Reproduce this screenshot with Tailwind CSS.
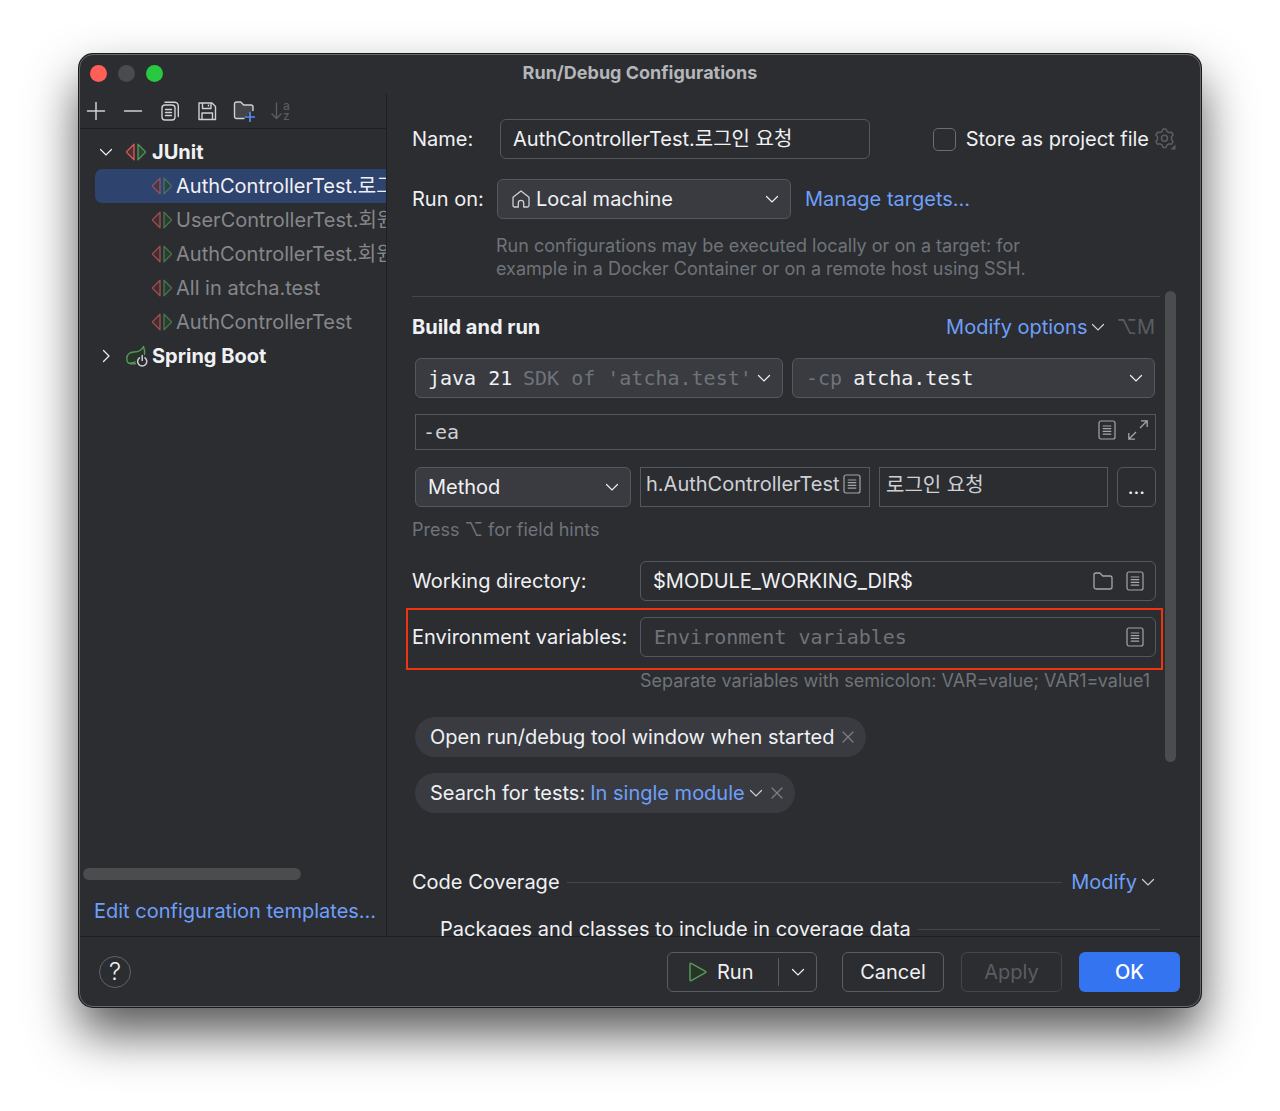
<!DOCTYPE html>
<html lang="ko">
<head>
    <meta charset="UTF-8">
    <meta name="viewport" content="width=device-width, initial-scale=1.0">
    <title>Run/Debug Configurations</title>
    <script src="https://cdn.jsdelivr.net/npm/@tailwindcss/browser@4"></script>
</head>
<body class="h-screen overflow-hidden bg-white px-[79px] pt-[54px] pb-[104px] font-['Inter','Noto_Sans_CJK_KR',sans-serif] text-[20px] leading-[28px] text-[#f0f1f4]">

    <!-- shared icons -->
    <svg class="hidden">
        <symbol id="chevron" viewBox="0 0 14 14"><path d="M1.500 4.500 7 10l5.500-5.500" fill="none" stroke="currentColor" stroke-width="1.200" stroke-linecap="round"/></symbol>
        <symbol id="list" viewBox="0 0 18 20" fill="none" stroke="currentColor" stroke-width="1.200" stroke-linecap="round">
            <rect x="1" y="1" width="16" height="18" rx="2"/>
            <path d="M5.200 6h7.600M5.200 8.700h7.600M5.200 11.400h7.600M5.200 14.100h7.600"/>
        </symbol>
        <symbol id="junit" viewBox="0 0 20 18" stroke-width="1.300" stroke-linejoin="round">
            <path d="M8 1.200v15.600L.8 9.600a.9.9 0 0 1 0-1.200z" fill="#4d3134" stroke="#db5c5c"/>
            <path d="M12 1.200v15.600l7.200-7.200a.9.9 0 0 0 0-1.200z" fill="#2b4531" stroke="#57965c"/>
        </symbol>
        <symbol id="close" viewBox="0 0 12 12"><path d="M1 1l10 10M11 1 1 11" stroke="currentColor" stroke-width="1.200" stroke-linecap="round"/></symbol>
    </svg>

    <div class="flex h-full flex-col overflow-hidden rounded-[14px] border border-[#66686b] bg-[#2b2d30] shadow-[0_0_0_1px_#1a1a1c,0_26px_50px_rgba(0,0,0,0.67)]">

        <!-- title bar -->
        <header class="flex h-[39px] shrink-0 items-center px-[10px] pb-[3px]">
            <div class="flex flex-1 gap-[11px]">
                <button aria-label="Close" class="size-[17px] rounded-full bg-[#ff5f57]"></button>
                <button aria-label="Minimize" class="size-[17px] rounded-full bg-[#4a4b4d]"></button>
                <button aria-label="Zoom" class="size-[17px] rounded-full bg-[#28c840]"></button>
            </div>
            <h1 class="text-[18px] font-bold text-[#b4b6ba]">Run/Debug Configurations</h1>
            <div class="flex-1"></div>
        </header>

        <div class="flex min-h-0 flex-1">
            <!-- configurations tree -->
            <aside class="flex w-[307px] shrink-0 flex-col border-r border-[#1e1f22]">
                <div class="flex h-[35px] shrink-0 items-center gap-[17px] border-b border-[#1e1f22] pl-[6px] text-[#ced0d6]">
                    <button aria-label="Add">
                        <svg class="size-[20px]" viewBox="0 0 20 20" stroke="currentColor" stroke-width="1.500" stroke-linecap="round"><path d="M10 1.500v17M1.500 10h17"/></svg>
                    </button>
                    <button aria-label="Remove">
                        <svg class="size-[20px]" viewBox="0 0 20 20" stroke="currentColor" stroke-width="1.500" stroke-linecap="round"><path d="M1.500 10h17"/></svg>
                    </button>
                    <button aria-label="Copy">
                        <svg class="size-[20px]" viewBox="0 0 20 20" fill="none" stroke="currentColor" stroke-width="1.400" stroke-linecap="round"><rect x="2" y="4" width="13" height="15" rx="3"/><path d="M5 1.200h9.500a3.800 3.800 0 0 1 3.800 3.800v10.500M5.500 8.500h6M5.500 11.500h6M5.500 14.500h6"/></svg>
                    </button>
                    <button aria-label="Save">
                        <svg class="size-[20px]" viewBox="0 0 20 20" fill="none" stroke="currentColor" stroke-width="1.400" stroke-linejoin="round"><path d="M2 2h13l3.500 3.500V18.500H2zM5.500 2v5.500h8.500V2M5 18.500v-6.500h10.500v6.500M11.500 3.500v2"/></svg>
                    </button>
                    <button aria-label="New folder" class="-mx-px">
                        <svg class="size-[22px]" viewBox="0 0 22 22" fill="none" stroke-linecap="round" stroke-linejoin="round"><path d="M11 18.500H3.500a2 2 0 0 1-2-2V4a2 2 0 0 1 2-2h4.200l3 3h7.300a2 2 0 0 1 2 2v3.500" stroke="currentColor" stroke-width="1.400" fill="#43454a"/><path d="M17 12.500v9M12.500 17h9" stroke="#548af7" stroke-width="1.700"/></svg>
                    </button>
                    <button aria-label="Sort" disabled class="flex items-center gap-px text-[#5a5d63]">
                        <svg class="h-[20px] w-[11px]" viewBox="0 0 11 20" fill="none" stroke="currentColor" stroke-width="1.400" stroke-linecap="round" stroke-linejoin="round"><path d="M5.500 2v15.500M1 13l4.500 4.500L10 13"/></svg>
                        <span class="text-[12px] leading-[10px] font-medium">a<br>z</span>
                    </button>
                </div>

                <ul class="min-h-0 flex-1 overflow-hidden whitespace-nowrap pt-[6px] text-[#85878b]">
                    <li class="flex h-[34px] items-center pl-[19px] font-bold text-[#f0f1f4]">
                        <svg class="size-[14px]"><use href="#chevron"/></svg>
                        <svg class="ml-[13px] mr-[6px] h-[18px] w-[20px] shrink-0"><use href="#junit"/></svg>
                        JUnit
                    </li>
                    <li class="ml-[15px] flex h-[34px] items-center overflow-hidden rounded-l-[7px] bg-[#2e436e] pl-[57px] text-[#f0f1f4]">
                        <svg class="mr-[4px] h-[18px] w-[20px] shrink-0 opacity-60"><use href="#junit"/></svg>
                        AuthControllerTest.로그인
                    </li>
                    <li class="flex h-[34px] items-center overflow-hidden pl-[72px]">
                        <svg class="mr-[4px] h-[18px] w-[20px] shrink-0 opacity-70"><use href="#junit"/></svg>
                        UserControllerTest.회원
                    </li>
                    <li class="flex h-[34px] items-center overflow-hidden pl-[72px]">
                        <svg class="mr-[4px] h-[18px] w-[20px] shrink-0 opacity-70"><use href="#junit"/></svg>
                        AuthControllerTest.회원
                    </li>
                    <li class="flex h-[34px] items-center pl-[72px]">
                        <svg class="mr-[4px] h-[18px] w-[20px] shrink-0 opacity-70"><use href="#junit"/></svg>
                        All in atcha.test
                    </li>
                    <li class="flex h-[34px] items-center pl-[72px]">
                        <svg class="mr-[4px] h-[18px] w-[20px] shrink-0 opacity-70"><use href="#junit"/></svg>
                        AuthControllerTest
                    </li>
                    <li class="flex h-[34px] items-center pl-[19px] font-bold text-[#f0f1f4]">
                        <svg class="size-[14px] -rotate-90"><use href="#chevron"/></svg>
                        <svg class="ml-[13px] mr-[4px] h-[22px] w-[22px] shrink-0" viewBox="0 0 22 22" fill="none" stroke-linecap="round" stroke-linejoin="round">
                            <path d="M9.500 18.800H4.500C2 18.500.8 16 .8 13.500c0-4 3.200-6.300 7-6.500 4.500-.2 8-1.500 9.700-5.500.9 2.500 1.400 5.300 1 8" fill="#253627" stroke="#57965c" stroke-width="1.400"/>
                            <path d="M3.500 18.200c3-.2 5-.7 7-2" stroke="#57965c" stroke-width="1.300"/>
                            <path d="M13.400 12.800a4.600 4.600 0 1 0 5.600 0M16.200 10.500v5" stroke="#2b2d30" stroke-width="4"/>
                            <path d="M13.400 12.800a4.600 4.600 0 1 0 5.600 0M16.200 10.500v5" stroke="#ced0d6" stroke-width="1.500"/>
                        </svg>
                        Spring Boot
                    </li>
                </ul>

                <div class="ml-[3px] h-[12px] w-[218px] shrink-0 rounded-full bg-[#4b4c4e]"></div>
                <a href="#" class="mt-[17px] mb-[11px] ml-[14px] text-[#6f9ffb]">Edit configuration templates...</a>
            </aside>

            <!-- configuration form -->
            <main class="flex min-w-0 flex-1 flex-col overflow-hidden pl-[25px] pr-[24px]">
                <div class="mt-[25px] flex shrink-0 items-center">
                    <label for="name" class="w-[88px]">Name:</label>
                    <input id="name" type="text" value="AuthControllerTest.로그인 요청" class="h-[40px] w-[370px] rounded-[6px] border border-[#55585e] px-[12px] pb-[3px]">
                    <input id="store" type="checkbox" class="mr-[10px] ml-auto size-[23px] appearance-none rounded-[5px] border border-[#6a6d73]">
                    <label for="store">Store as project file</label>
                    <button aria-label="Storage settings" class="ml-[5px] text-[#5a5d63]">
                        <svg class="size-[22px]" viewBox="0 0 22 22" fill="none" stroke="currentColor" stroke-width="1.500" stroke-linejoin="round"><path d="M8 3.500 9 1h3l1 2.500 2 1.100 2.600-.4 1.500 2.600L17.500 9v2.500l1.600 2.100-1.500 2.600-2.600-.4-2 1.100-1 2.500H9l-1-2.500-2-1.100-2.600.4-1.500-2.600L3.500 11.500V9L1.900 6.800l1.500-2.600 2.600.4z"/><circle cx="10.500" cy="10.300" r="3"/><path d="M21.500 16.500v5h-5z" fill="currentColor" stroke="none"/></svg>
                    </button>
                </div>

                <div class="mt-[20px] flex shrink-0 items-center">
                    <label for="target" class="w-[85px]">Run on:</label>
                    <div class="flex h-[40px] w-[294px] items-center rounded-[6px] border border-[#55585e] bg-[#393b40] pr-[11px] pl-[14px]">
                        <svg class="mr-[6px] size-[18px] shrink-0" viewBox="0 0 18 18" fill="none" stroke="#ced0d6" stroke-width="1.300" stroke-linejoin="round"><path d="M1 7.300 9 .9l8 6.400v8.200a1.500 1.500 0 0 1-1.500 1.500h-3.800v-4a2.700 2.700 0 0 0-5.400 0v4H2.500A1.500 1.500 0 0 1 1 15.500z"/></svg>
                        <select id="target" class="min-w-0 flex-1 appearance-none"><option>Local machine</option></select>
                        <svg class="size-[14px] shrink-0"><use href="#chevron"/></svg>
                    </div>
                    <a href="#" class="ml-[14px] text-[#6f9ffb]">Manage targets...</a>
                </div>

                <p class="mt-[15px] ml-[84px] w-[560px] shrink-0 text-[18px] leading-[23px] text-[#6f737a]">Run configurations may be executed locally or on a target: for<br>example in a Docker Container or on a remote host using SSH.</p>

                <div class="mt-[11px] flex min-h-0 flex-1">
                    <div class="min-w-0 flex-1">
                        <div class="mt-[5px] mr-[5px] border-t border-[#43454a]"></div>

                        <div class="mt-[16px] mr-[10px] flex items-center">
                            <h2 class="font-bold">Build and run</h2>
                            <button class="ml-auto flex items-center gap-[4px] text-[#6f9ffb]">Modify options <svg class="size-[14px] text-[#ced0d6]"><use href="#chevron"/></svg></button>
                            <span class="ml-[11px] font-['Inter','DejaVu_Sans',sans-serif] text-[#5a5d63]">⌥M</span>
                        </div>

                        <div class="mt-[17px] mr-[10px] ml-[3px] flex gap-[9px] font-['DejaVu_Sans_Mono',monospace]">
                            <div class="flex h-[40px] w-[368px] items-center rounded-[6px] border border-[#55585e] bg-[#393b40] pr-[11px] pl-[12px]">
                                <select aria-label="JRE" class="w-[95px] appearance-none"><option>java 21</option></select>
                                <span class="text-[#6f737a]">SDK of 'atcha.test'</span>
                                <svg class="ml-auto size-[14px] shrink-0"><use href="#chevron"/></svg>
                            </div>
                            <div class="flex h-[40px] flex-1 items-center rounded-[6px] border border-[#55585e] bg-[#393b40] pr-[11px] pl-[13px]">
                                <label for="classpath" class="mr-[11px] text-[#6f737a]">-cp</label>
                                <select id="classpath" class="min-w-0 flex-1 appearance-none"><option>atcha.test</option></select>
                                <svg class="size-[14px] shrink-0"><use href="#chevron"/></svg>
                            </div>
                        </div>

                        <div class="mt-[16px] mr-[9px] ml-[3px] flex h-[36px] items-center border border-[#55585e] px-[7px] text-[#ced0d6]">
                            <input aria-label="VM options" type="text" value="-ea" class="min-w-0 flex-1 font-['DejaVu_Sans_Mono',monospace]">
                            <button aria-label="Insert macro" class="mb-[5px]"><svg class="h-[20px] w-[18px] text-[#a3a6ac]"><use href="#list"/></svg></button>
                            <button aria-label="Expand" class="mb-[5px] ml-[12px]">
                                <svg class="size-[20px]" viewBox="0 0 20 20" fill="none" stroke="#a3a6ac" stroke-width="1.300"><path d="M12 8l7-7M13 .8h6.200V7M8 12l-7 7M.8 13v6.200H7"/></svg>
                            </button>
                        </div>

                        <div class="mt-[17px] mr-[9px] ml-[3px] flex gap-[9px]">
                            <div class="flex h-[40px] w-[216px] shrink-0 items-center rounded-[6px] border border-[#55585e] bg-[#393b40] pr-[11px] pl-[12px]">
                                <select aria-label="Test kind" class="min-w-0 flex-1 appearance-none"><option>Method</option></select>
                                <svg class="size-[14px] shrink-0"><use href="#chevron"/></svg>
                            </div>
                            <div class="flex h-[40px] min-w-0 flex-1 items-center border border-[#55585e] pr-[8px] pb-[6px] pl-[5px] text-[#ced0d6]">
                                <input aria-label="Class" type="text" value="h.AuthControllerTest" class="min-w-0 flex-1">
                                <button aria-label="Browse class"><svg class="h-[20px] w-[18px] text-[#a3a6ac]"><use href="#list"/></svg></button>
                            </div>
                            <input aria-label="Method" type="text" value="로그인 요청" class="h-[40px] min-w-0 flex-1 border border-[#55585e] px-[6px] pb-[8px] text-[#ced0d6]">
                            <button aria-label="Browse method" class="h-[40px] w-[39px] shrink-0 rounded-[6px] border border-[#55585e]">...</button>
                        </div>

                        <p class="mt-[11px] font-['Inter','DejaVu_Sans',sans-serif] text-[18px] leading-[24px] text-[#6f737a]">Press ⌥ for field hints</p>

                        <div class="mt-[19px] mr-[9px] flex items-center">
                            <label for="workdir" class="w-[228px] shrink-0">Working directory:</label>
                            <div class="flex h-[40px] min-w-0 flex-1 items-center rounded-[6px] border border-[#55585e] pr-[11px] pl-[12px]">
                                <input id="workdir" type="text" value="$MODULE_WORKING_DIR$" class="min-w-0 flex-1">
                                <button aria-label="Browse folder">
                                    <svg class="h-[18px] w-[20px]" viewBox="0 0 20 18" fill="none" stroke="#a3a6ac" stroke-width="1.300" stroke-linejoin="round"><path d="M1 3a2 2 0 0 1 2-2h3.800l3 3H17a2 2 0 0 1 2 2v9a2 2 0 0 1-2 2H3a2 2 0 0 1-2-2z"/></svg>
                                </button>
                                <button aria-label="Insert macro" class="ml-[13px]"><svg class="h-[20px] w-[18px] text-[#a3a6ac]"><use href="#list"/></svg></button>
                            </div>
                        </div>

                        <!-- highlighted row -->
                        <div class="mt-[7px] mr-[2px] -ml-[6px] flex items-center border-2 border-[#f0340f] pt-[7px] pr-[5px] pb-[11px] pl-[4px]">
                            <label for="env" class="w-[228px] shrink-0">Environment variables:</label>
                            <div class="flex h-[40px] min-w-0 flex-1 items-center rounded-[6px] border border-[#55585e] pr-[11px] pl-[13px]">
                                <input id="env" type="text" placeholder="Environment variables" class="min-w-0 flex-1 font-['DejaVu_Sans_Mono',monospace] placeholder:text-[#6f737a]">
                                <button aria-label="Edit variables"><svg class="h-[20px] w-[18px] text-[#a3a6ac]"><use href="#list"/></svg></button>
                            </div>
                        </div>
                        <p class="ml-[228px] text-[18px] leading-[22px] whitespace-nowrap text-[#6f737a]">Separate variables with semicolon: VAR=value; VAR1=value1</p>

                        <div class="mt-[25px] ml-[3px] flex flex-col items-start gap-[16px]">
                            <div class="flex h-[40px] items-center rounded-full bg-[#393b40] pr-[12px] pl-[15px]">
                                Open run/debug tool window when started
                                <button aria-label="Remove option" class="ml-[8px] text-[#7d8087]"><svg class="size-[12px]"><use href="#close"/></svg></button>
                            </div>
                            <div class="flex h-[40px] items-center rounded-full bg-[#393b40] pr-[12px] pl-[15px]">
                                Search for tests:
                                <button class="ml-[5px] flex items-center gap-[4px] text-[#6f9ffb]">In single module <svg class="size-[14px] text-[#ced0d6]"><use href="#chevron"/></svg></button>
                                <button aria-label="Remove option" class="ml-[8px] text-[#7d8087]"><svg class="size-[12px]"><use href="#close"/></svg></button>
                            </div>
                        </div>

                        <div class="mt-[55px] mr-[10px] flex items-center">
                            <h2>Code Coverage</h2>
                            <div class="mr-[9px] ml-[7px] flex-1 border-t border-[#43454a]"></div>
                            <button class="flex items-center gap-[4px] text-[#6f9ffb]">Modify <svg class="size-[14px] text-[#ced0d6]"><use href="#chevron"/></svg></button>
                        </div>
                        <div class="mt-[19px] mr-[5px] ml-[28px] flex items-center">
                            <h3>Packages and classes to include in coverage data</h3>
                            <div class="ml-[7px] flex-1 border-t border-[#43454a]"></div>
                        </div>
                    </div>
                    <div class="h-[73%] w-[11px] shrink-0 rounded-full bg-[#4b4c4e]"></div>
                </div>
            </main>
        </div>

        <!-- dialog buttons -->
        <footer class="flex h-[70px] shrink-0 items-center border-t border-[#1e1f22] pr-[20px] pl-[19px]">
            <button aria-label="Help" class="size-[32px] rounded-full border border-[#5f6268] text-[24px] font-light">?</button>
            <div class="ml-auto flex h-[40px] w-[150px] items-center rounded-[6px] border border-[#5a5d63]">
                <button class="flex w-[110px] items-center gap-[10px] pl-[21px]">
                    <svg class="h-[20px] w-[18px]" viewBox="0 0 18 20" fill="#253627" stroke="#57965c" stroke-width="1.500" stroke-linejoin="round"><path d="M1 2v16a.8.8 0 0 0 1.200.7l14.300-8a.8.8 0 0 0 0-1.400L2.200 1.300A.8.8 0 0 0 1 2z"/></svg>
                    Run
                </button>
                <button aria-label="More run options" class="flex h-[28px] flex-1 items-center justify-center border-l border-[#5a5d63]"><svg class="size-[14px]"><use href="#chevron"/></svg></button>
            </div>
            <button class="ml-[25px] h-[40px] w-[102px] rounded-[6px] border border-[#5a5d63]">Cancel</button>
            <button disabled class="ml-[17px] h-[40px] w-[101px] rounded-[6px] border border-[#43454a] text-[#5a5d63]">Apply</button>
            <button class="ml-[17px] h-[40px] w-[101px] rounded-[6px] bg-[#3574f0] font-medium text-white">OK</button>
        </footer>
    </div>
</body>
</html>
